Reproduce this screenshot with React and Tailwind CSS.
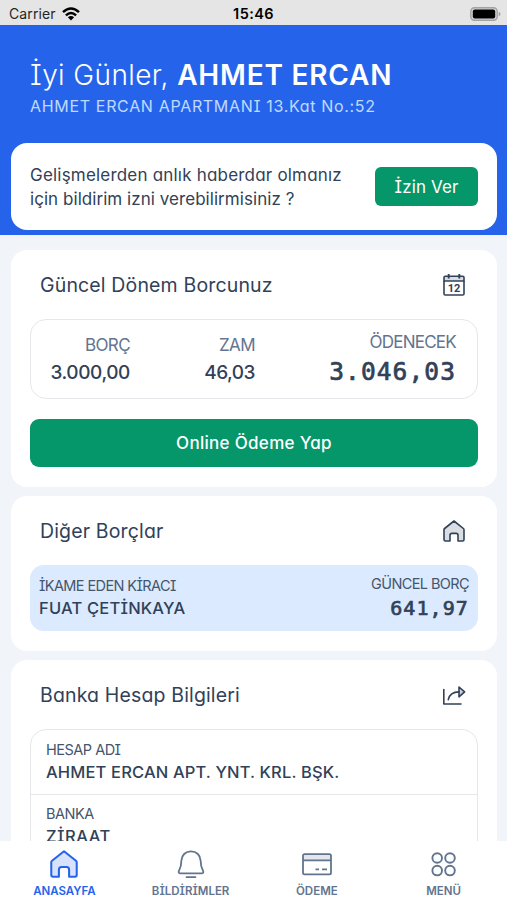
const lexend = "font-['Inter',sans-serif] [font-feature-settings:'cv08','cv11'] whitespace-nowrap";
const plex = "font-['Inter',sans-serif] [font-feature-settings:'cv08'] whitespace-nowrap";
const mono = "font-['DejaVu_Sans_Mono',monospace] [-webkit-text-stroke:0.7px_currentColor] whitespace-nowrap";

const HomeIcon = ({ className }) => (
  <svg viewBox="0 0 22 22" className={className} fill="currentColor" fillOpacity="0.18" stroke="currentColor" strokeWidth="1.6" strokeLinejoin="round">
    <path d="M11 1 1.6 8.5Q1 9 1 9.8V19.6Q1 21 2.4 21H7V15.4Q7 13.4 9 13.4H13Q15 13.4 15 15.4V21H19.6Q21 21 21 19.6V9.8Q21 9 20.4 8.5Z" />
  </svg>
);

const CalendarIcon = () => (
  <svg viewBox="0 0 22 22" className="size-[22px] text-slate-700" fill="none" stroke="currentColor" strokeWidth="1.6">
    <path d="M1 7V3.5Q1 2.2 2.3 2.2H19.7Q21 2.2 21 3.5V7Z" fill="currentColor" fillOpacity="0.18" />
    <path d="M1 7V19.7Q1 21 2.3 21H19.7Q21 21 21 19.7V7" />
    <path d="M5.7 0V4.5M16.3 0V4.5" strokeWidth="1.9" />
    <text x="11" y="18" textAnchor="middle" fontSize="11" fontWeight="700" fontFamily="Roboto, sans-serif" fill="currentColor" stroke="none">12</text>
  </svg>
);

const ShareIcon = () => (
  <svg viewBox="0 0 22 22" className="size-[22px] text-slate-700 overflow-visible" fill="none" stroke="currentColor" strokeWidth="1.6" strokeLinecap="round" strokeLinejoin="round">
    <path d="M0.8 5.5V20H18" />
    <path d="M5.3 15.6C6.3 11 10 8 16 7.9" />
    <path d="M16 3 21.6 7.9 16 12.8Z" fill="currentColor" fillOpacity="0.25" />
  </svg>
);

const BellIcon = () => (
  <svg viewBox="0 0 28 28" className="size-7" fill="none" stroke="currentColor" strokeWidth="1.8" strokeLinecap="round" strokeLinejoin="round">
    <path d="M14 1.4C8.4 1.4 4.6 5.3 4.4 10.5C4.3 15.5 3.8 17.3 2.2 20.2C1.1 22.2 1.6 23.4 3.8 23.4H24.2C26.4 23.4 26.9 22.2 25.8 20.2C24.2 17.3 23.7 15.5 23.6 10.5C23.4 5.3 19.6 1.4 14 1.4Z" />
    <path d="M9.5 27.1H18.5" />
  </svg>
);

const CardIcon = () => (
  <svg viewBox="0 0 32 28" className="h-7 w-8" fill="none" stroke="currentColor" strokeWidth="1.8" strokeLinejoin="round">
    <rect x="2" y="4.2" width="28" height="20.2" rx="1.6" />
    <path d="M2 10.3H30M14.5 19.4H18M21 19.4H26" />
    <path d="M2.5 5H29.5V10H2.5Z" fill="currentColor" fillOpacity="0.18" stroke="none" />
  </svg>
);

const MenuIcon = () => (
  <svg viewBox="0 0 28 28" className="size-7" fill="none" stroke="currentColor" strokeWidth="1.9">
    {[8, 20.6].map((y) => [7.2, 20].map((x) => <circle key={`${x}-${y}`} cx={x} cy={y} r="4.8" />))}
  </svg>
);

const tabs = [
  { label: 'ANASAYFA', icon: <HomeIcon className="size-7" />, color: 'pl-0.5 text-[#2563eb]' },
  { label: 'BİLDİRİMLER', icon: <BellIcon />, color: 'pl-px text-slate-500' },
  { label: 'ÖDEME', icon: <CardIcon />, color: 'text-slate-500' },
  { label: 'MENÜ', icon: <MenuIcon />, color: 'text-slate-500' },
];

const Section = ({ title, icon, className, children }) => (
  <section className={`ml-[11px] mr-[10px] shrink-0 rounded-[16px] bg-white px-[19px] ${className}`}>
    <div className="flex h-[69px] items-center justify-between pl-[10px] pr-[13px]">
      <h2 className={`${lexend} pt-[3px] text-[19.5px] tracking-[0.15px] text-slate-700`}>{title}</h2>
      {icon}
    </div>
    {children}
  </section>
);

const App = () => {
  return (
    <div className="flex h-[900px] w-[507px] flex-col overflow-hidden bg-slate-100">
      {/* Status bar */}
      <div className="grid h-[25px] shrink-0 grid-cols-3 items-center bg-[#e5e5e5] px-[9px] pt-0.5 text-black">
        <div className="flex items-center gap-1.5">
          <span className="font-['Inter',sans-serif] text-[14px] leading-5 tracking-[0.1px] text-neutral-800">Carrier</span>
          <svg viewBox="0 0 18 14" className="h-[14px] w-[18px]" fill="none" stroke="black" strokeWidth="2.4">
            <path d="M1 5.2Q9-2.2 17 5.2M3.9 8.3Q9 3.6 14.1 8.3" />
            <path d="M9 13.4 5.9 10.3Q9 7.6 12.1 10.3Z" fill="black" stroke="none" />
          </svg>
        </div>
        <span className="text-center font-['Inter',sans-serif] text-[14.5px] font-semibold leading-5 tracking-[0.4px]">15:46</span>
        <svg viewBox="0 0 31 14" className="h-[14px] w-[31px] translate-x-[3px] justify-self-end">
          <rect x="0.8" y="0.8" width="26.4" height="12.4" rx="3.6" fill="#d4d4d4" stroke="#a3a3a3" strokeWidth="1.4" />
          <rect x="2.8" y="2.4" width="22.4" height="9.2" rx="2" fill="black" />
          <path d="M28.7 4.7Q30.6 5.5 30.6 7T28.7 9.3Z" fill="#a3a3a3" />
        </svg>
      </div>

      {/* Header */}
      <header className="h-[210px] shrink-0 bg-[#2563eb] pl-[11px] pr-[10px] pt-[30px]">
        <div className="h-[88px] pl-[19px]">
          <h1 className={`${lexend} text-[28px] leading-10 text-white`}>
            <span className="font-light tracking-[0.4px]">İyi Günler, </span>
            <span className="font-semibold tracking-[0.8px]">AHMET ERCAN</span>
          </h1>
          <p className={`${lexend} text-[16px] leading-[22px] tracking-[0.67px] text-blue-200`}>AHMET ERCAN APARTMANI 13.Kat No.:52</p>
        </div>
        <div className="flex h-[87px] items-center justify-between rounded-[16px] bg-white px-[19px]">
          <p className={`${lexend} pt-px text-[17px] leading-[24.5px] text-slate-700`}>
            <span className="block tracking-[0.2px]">Gelişmelerden anlık haberdar olmanız</span>
            <span className="block tracking-[0.05px]">için bildirim izni verebilirmisiniz ?</span>
          </p>
          <button className={`${lexend} h-[39px] w-[103px] rounded-md bg-[#059669] pt-0.5 text-[17px] tracking-[0.1px] text-white`}>İzin Ver</button>
        </div>
      </header>

      <main className="flex min-h-0 flex-1 flex-col gap-[9px] overflow-hidden pt-[15px]">
        <Section title="Güncel Dönem Borcunuz" icon={<CalendarIcon />} className="h-[237px]">
          <div className="flex h-20 rounded-[16px] border border-gray-200 pr-[21px] text-right">
            <div className="w-[99px] pt-[14px]">
              <p className={`${plex} text-[17px] leading-[22px] tracking-[-0.6px] text-slate-500`}>BORÇ</p>
              <p className={`${lexend} text-[19px] font-medium leading-[33px] tracking-[-0.4px] text-slate-700`}>3.000,00</p>
            </div>
            <div className="w-[125px] pt-[14px]">
              <p className={`${plex} text-[17px] leading-[22px] tracking-[-0.6px] text-slate-500`}>ZAM</p>
              <p className={`${lexend} text-[19px] font-medium leading-[33px] tracking-[-0.5px] text-slate-700`}>46,03</p>
            </div>
            <div className="flex-1 pt-[11px]">
              <p className={`${plex} text-[17px] leading-[22px] tracking-[-0.75px] text-slate-500`}>ÖDENECEK</p>
              <p className={`${mono} text-[24.5px] leading-[37px] tracking-[1.1px] text-slate-700`}>3.046,03</p>
            </div>
          </div>
          <button className={`${lexend} mt-5 h-[48px] w-full rounded-[9px] bg-[#059669] pt-px text-[17px] font-medium tracking-[0.3px] text-white`}>
            Online Ödeme Yap
          </button>
        </Section>

        <Section title="Diğer Borçlar" icon={<HomeIcon className="size-[22px] text-slate-700" />} className="h-[155px]">
          <div className="flex h-[66px] justify-between rounded-[14px] bg-blue-100 px-[9px]">
            <div className="pt-[10px]">
              <p className={`${plex} text-[14.5px] leading-[22px] tracking-[-0.6px] text-slate-600`}>İKAME EDEN KİRACI</p>
              <p className={`${lexend} text-[16.5px] font-medium leading-[23px] tracking-[0.2px] text-slate-700`}>FUAT ÇETİNKAYA</p>
            </div>
            <div className="pt-[8px] text-right">
              <p className={`${plex} text-[14.5px] leading-[22px] tracking-[-0.6px] text-slate-600`}>GÜNCEL BORÇ</p>
              <p className={`${mono} text-[20px] leading-[27px] tracking-[1.1px] text-slate-700`}>641,97</p>
            </div>
          </div>
        </Section>

        <Section title="Banka Hesap Bilgileri" icon={<ShareIcon />} className="h-[300px]">
          <div className="h-[200px] rounded-t-[16px] border border-gray-200">
            <div className="h-[65px] border-b border-gray-200 pl-[15px] pt-[9px]">
              <p className={`${plex} text-[14.5px] leading-[22px] tracking-[-0.5px] text-slate-600`}>HESAP ADI</p>
              <p className={`${lexend} text-[16.5px] font-medium leading-[23px] tracking-[0.15px] text-slate-700`}>AHMET ERCAN APT. YNT. KRL. BŞK.</p>
            </div>
            <div className="pl-[15px] pt-[8px]">
              <p className={`${plex} text-[14.5px] leading-[22px] tracking-[-0.5px] text-slate-600`}>BANKA</p>
              <p className={`${lexend} text-[16.5px] font-medium leading-[23px] tracking-[0.5px] text-slate-700`}>ZİRAAT</p>
            </div>
          </div>
        </Section>
      </main>

      {/* Bottom tabs */}
      <nav className="grid h-[59px] shrink-0 grid-cols-4 bg-white pt-[9px]">
        {tabs.map((t) => (
          <div key={t.label} className={`flex flex-col items-center ${t.color}`}>
            {t.icon}
            <span className={`${plex} mt-[5px] text-[11.5px] font-semibold leading-4`}>{t.label}</span>
          </div>
        ))}
      </nav>
    </div>
  );
};

export default App;
